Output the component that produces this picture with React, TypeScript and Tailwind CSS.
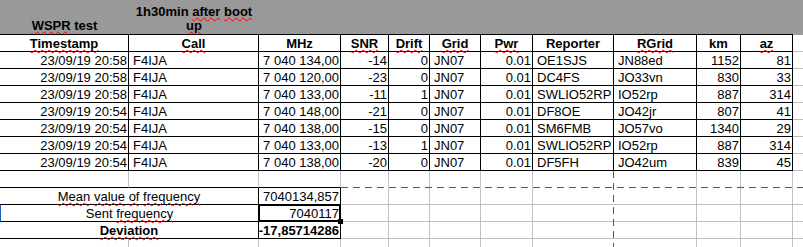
import React from "react";

const W = [
  "w-[129px]",
  "w-[130px]",
  "w-[82px]",
  "w-[48px]",
  "w-[41px]",
  "w-[51px]",
  "w-[52px]",
  "w-[81px]",
  "w-[83px]",
  "w-[44px]",
  "w-[52px]",
];

const Sq = ({ children }: { children: React.ReactNode }) => (
  <span className="underline decoration-wavy decoration-[#ff0000] decoration-1 underline-offset-[1px]">
    {children}
  </span>
);

type Align = "l" | "r" | "c";

const alignCls: Record<Align, string> = {
  l: "justify-start pl-[4px]",
  r: "justify-end pr-[1px]",
  c: "justify-center",
};

function Cell({
  w,
  align = "l",
  cls = "",
  children,
}: {
  w: string;
  align?: Align;
  cls?: string;
  children?: React.ReactNode;
}) {
  return (
    <div
      className={`box-border h-[17px] shrink-0 flex items-end whitespace-nowrap border-r border-b leading-[15px] ${w} ${alignCls[align]} ${cls}`}
    >
      {children}
    </div>
  );
}

const rows: string[][] = [
  ["23/09/19 20:58", "F4IJA", "7 040 134,00", "-14", "0", "JN07", "0.01", "OE1SJS", "JN88ed", "1152", "81"],
  ["23/09/19 20:58", "F4IJA", "7 040 120,00", "-23", "0", "JN07", "0.01", "DC4FS", "JO33vn", "830", "33"],
  ["23/09/19 20:58", "F4IJA", "7 040 133,00", "-11", "1", "JN07", "0.01", "SWLIO52RP", "IO52rp", "887", "314"],
  ["23/09/19 20:54", "F4IJA", "7 040 148,00", "-21", "0", "JN07", "0.01", "DF8OE", "JO42jr", "807", "41"],
  ["23/09/19 20:54", "F4IJA", "7 040 138,00", "-15", "0", "JN07", "0.01", "SM6FMB", "JO57vo", "1340", "29"],
  ["23/09/19 20:54", "F4IJA", "7 040 133,00", "-13", "1", "JN07", "0.01", "SWLIO52RP", "IO52rp", "887", "314"],
  ["23/09/19 20:54", "F4IJA", "7 040 138,00", "-20", "0", "JN07", "0.01", "DF5FH", "JO42um", "839", "45"],
];

const aligns: Align[] = ["r", "l", "r", "r", "r", "l", "r", "l", "l", "r", "r"];

const headers: React.ReactNode[] = [
  <Sq>Timestamp</Sq>,
  <Sq>Call</Sq>,
  "MHz",
  <Sq>SNR</Sq>,
  <Sq>Drift</Sq>,
  <Sq>Grid</Sq>,
  <Sq>Pwr</Sq>,
  "Reporter",
  <Sq>RGrid</Sq>,
  "km",
  <Sq>az</Sq>,
];

function GrayTail({ from }: { from: number }) {
  // plain spreadsheet gridlines for columns from `from` to the end
  return (
    <>
      {W.slice(from).map((w, i) => (
        <Cell
          key={i}
          w={w}
          cls={`border-b-[#c0c0c0] ${from + i === 7 ? "border-r-transparent" : "border-r-[#c0c0c0]"}`}
        />
      ))}
      <div className="box-border h-[17px] flex-1 border-b border-b-[#c0c0c0]" />
    </>
  );
}

export default function App() {
  return (
    <div className="relative w-[803px] h-[247px] overflow-hidden bg-white text-[13px] text-black font-['Liberation_Sans',Arial,sans-serif]">
      {/* grey title band */}
      <div className="flex h-[34px] bg-[#999999] font-bold leading-[14px]">
        <div className="w-[129px] shrink-0 flex items-end justify-center pb-[1px]">
          <span>
            <Sq>WSPR</Sq> test
          </span>
        </div>
        <div className="w-[130px] shrink-0 flex items-end justify-center text-center pb-[1px]">
          <span>
            1h30min <Sq>after</Sq> <Sq>boot</Sq> <Sq>up</Sq>
          </span>
        </div>
      </div>

      {/* header row */}
      <div className="flex">
        {headers.map((h, i) => (
          <Cell key={i} w={W[i]} align="c" cls="h-[18px] border-t border-black font-bold">
            {h}
          </Cell>
        ))}
        <div className="box-border h-[18px] flex-1 border-t border-t-[#999999] border-b border-b-[#c0c0c0]" />
      </div>

      {/* data rows */}
      {rows.map((r, ri) => (
        <div key={ri} className="flex">
          {r.map((v, ci) => (
            <Cell key={ci} w={W[ci]} align={aligns[ci]} cls="border-black">
              {v}
            </Cell>
          ))}
          <div className="box-border h-[17px] flex-1 border-b border-b-[#c0c0c0]" />
        </div>
      ))}

      {/* empty row */}
      <div className="flex">
        <Cell w={W[0]} cls="border-r-[#c0c0c0] border-b-black" />
        <Cell w={W[1]} cls="border-r-[#c0c0c0] border-b-black" />
        <Cell w={W[2]} cls="border-r-[#c0c0c0] border-b-black" />
        {W.slice(3).map((w, i) => (
          <Cell
            key={i}
            w={w}
            cls={`border-b-transparent ${i + 3 === 7 ? "border-r-transparent" : "border-r-[#c0c0c0]"}`}
          />
        ))}
        <div className="box-border h-[17px] flex-1 border-b border-b-transparent" />
      </div>

      {/* mean */}
      <div className="flex">
        <Cell w="w-[259px]" align="c" cls="border-black">
          <span>
            <Sq>Mean</Sq> <Sq>value</Sq> <Sq>of</Sq> <Sq>frequency</Sq>
          </span>
        </Cell>
        <Cell w={W[2]} align="r" cls="border-black">
          7040134,857
        </Cell>
        <GrayTail from={3} />
      </div>

      {/* sent */}
      <div className="flex">
        <Cell w="w-[259px]" align="c" cls="border-black border-l border-l-[#1565c0]">
          <span>
            Sent <Sq>frequency</Sq>
          </span>
        </Cell>
        <div className="relative box-border h-[17px] w-[82px] shrink-0 flex items-end justify-end pr-[1px] whitespace-nowrap border-r border-b border-black leading-[15px]">
          7040117
          <div className="absolute left-[-1px] top-[-1px] w-[83px] h-[18px] box-border border-2 border-black z-10" />
          <div className="absolute left-[79px] top-[14px] w-[5px] h-[5px] bg-black z-10" />
        </div>
        <GrayTail from={3} />
      </div>

      {/* deviation */}
      <div className="flex font-bold">
        <Cell w="w-[259px]" align="c" cls="border-black">
          <Sq>Deviation</Sq>
        </Cell>
        <Cell w={W[2]} align="r" cls="border-black">
          -17,85714286
        </Cell>
        <GrayTail from={3} />
      </div>

      {/* trailing row */}
      <div className="flex">
        <Cell w={W[0]} cls="border-r-[#c0c0c0] border-b-[#c0c0c0]" />
        <Cell w={W[1]} cls="border-r-[#c0c0c0] border-b-[#c0c0c0]" />
        <Cell w={W[2]} cls="border-r-[#c0c0c0] border-b-[#c0c0c0]" />
        <GrayTail from={3} />
      </div>

      {/* page-break indicators */}
      <svg
        className="absolute left-0 top-0 pointer-events-none"
        width="803"
        height="247"
        viewBox="0 0 803 247"
      >
        <line x1="341" y1="187.5" x2="803" y2="187.5" stroke="#555" strokeWidth="1" strokeDasharray="7 5" />
        <line x1="613.5" y1="171" x2="613.5" y2="247" stroke="#555" strokeWidth="1" strokeDasharray="7 5" />
      </svg>
    </div>
  );
}
